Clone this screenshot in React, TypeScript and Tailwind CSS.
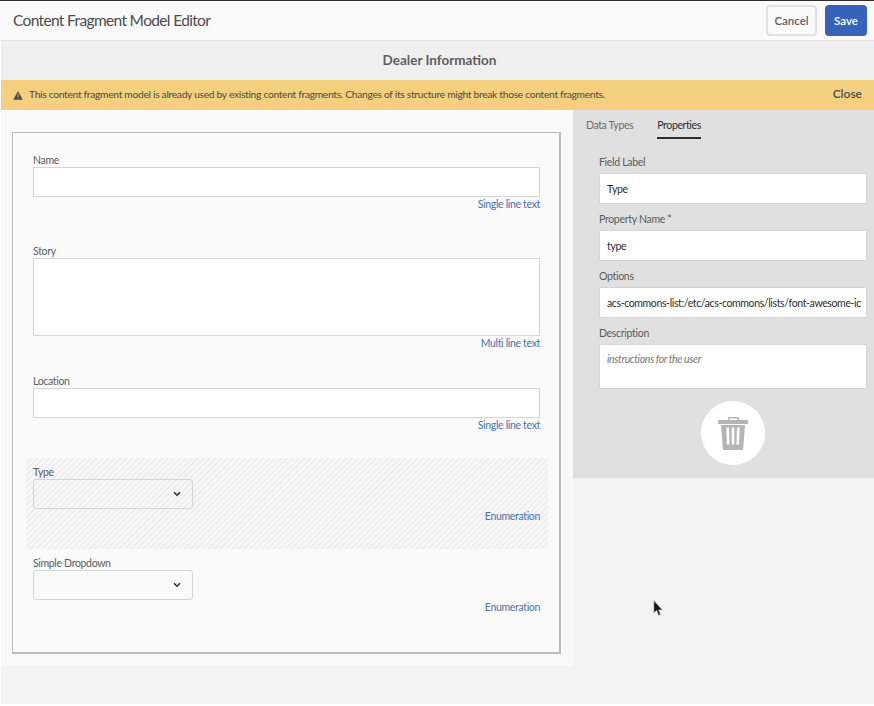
const font = { fontFamily: 'Lato, "Open Sans", sans-serif' }

function TextField({ label, kind, tall }: { label: string; kind: string; tall?: boolean }) {
  return (
    <div className="pl-[20px] pr-[19px]">
      <div className="h-[15px] text-[10.5px] leading-[17px] tracking-[-0.33px] text-[#5c5c5c]">{label}</div>
      <div className={`${tall ? 'h-[78px]' : 'h-[30px]'} border border-[#d5d5d5] bg-white`} />
      <div className="mt-[1px] text-right text-[10.5px] leading-[13px] tracking-[-0.33px] text-[#4a6fb0]">{kind}</div>
    </div>
  )
}

function Chevron() {
  return (
    <svg width="8" height="6" viewBox="0 0 8 6" className="text-[#2c2c2c]">
      <path d="M1 1.2 4 4.2 7 1.2" fill="none" stroke="currentColor" strokeWidth="1.5" />
    </svg>
  )
}

function SelectField({ label }: { label: string }) {
  return (
    <div className="flex flex-col">
      <div className="h-[15px] text-[10.5px] leading-[17px] tracking-[-0.33px] text-[#5c5c5c]">{label}</div>
      <div className="flex h-[30px] w-[160px] items-center justify-end rounded-[3px] border border-[#d5d5d5] pr-[11px]">
        <Chevron />
      </div>
      <div className="mt-[1px] text-right text-[10.5px] leading-[13px] tracking-[-0.33px] text-[#4a6fb0]">Enumeration</div>
    </div>
  )
}

function PropField({ label, value, italic }: { label: string; value?: string; italic?: boolean }) {
  return (
    <div className="mb-[8px]">
      <div className="h-[18px] text-[10.5px] leading-[15px] tracking-[-0.3px] text-[#5c5c5c]">{label}</div>
      <div
        className={`${italic ? 'h-[45px] pt-[7px] text-[10.5px] italic text-[#777777]' : 'h-[31px] text-[10.5px] leading-[30px] text-[#2c2c2c]'} overflow-hidden whitespace-nowrap rounded-[1px] border border-[#d5d5d5] bg-white pl-[7px] tracking-[-0.37px]`}
      >
        {value}
      </div>
    </div>
  )
}

export default function App() {
  return (
    <div style={font} className="relative flex h-[706px] w-[874px] flex-col overflow-hidden bg-[#f3f3f3]">
      <header className="flex h-[41px] shrink-0 items-center justify-between border-t border-b border-t-[#2e2e2e] border-b-[#e2e2e2] bg-[#fafafa] pl-[13px] pr-[7px]">
        <h1 className="text-[15.5px] tracking-[-0.65px] text-[#4b4b4b]">Content Fragment Model Editor</h1>
        <div className="flex gap-[8px]">
          <button className="h-[31px] w-[51px] rounded-[4px] border-2 border-[#e1e1e1] bg-[#fafafa] text-[11.5px] font-semibold text-[#5f5f5f]">Cancel</button>
          <button className="h-[31px] w-[42px] rounded-[4px] bg-[#3663b9] text-[11.5px] font-semibold text-white">Save</button>
        </div>
      </header>

      <div className="flex h-[39px] shrink-0 items-center justify-center bg-[#efefef] pl-[5px] text-[13.5px] font-bold text-[#5e5e5e]">Dealer Information</div>

      <div className="flex h-[30px] shrink-0 items-center justify-between bg-[#f3cf7e] pl-[13px] pr-[12px] text-[#4b4b4b]">
        <div className="flex items-center gap-[6px] text-[10.25px] tracking-[-0.3px]">
          <svg width="10" height="9" viewBox="0 0 10 9">
            <path d="M5 .3 9.800 8.700H.2Z" fill="#4b4b4b" />
            <path d="M4.600 3h.8v3h-.8ZM4.600 6.700h.8v.9h-.8Z" fill="#f3cf7e" />
          </svg>
          <span>This content fragment model is already used by existing content fragments. Changes of its structure might break those content fragments.</span>
        </div>
        <span className="-mt-[3px] text-[12px] font-semibold">Close</span>
      </div>

      <div className="flex flex-1 items-start">
        <div className="h-[556px] w-[573px] shrink-0 bg-[#f9f9f9] pl-[12px] pt-[22px]">
          <div className="h-[522px] w-[549px] border border-b-2 border-r-2 border-[#bcbcbc] bg-[#fafafa] pt-[19px]">
            <TextField label="Name" kind="Single line text" />
            <div className="h-[32px]" />
            <TextField label="Story" kind="Multi line text" tall />
            <div className="h-[23px]" />
            <TextField label="Location" kind="Single line text" />
            <div className="h-[26px]" />
            <div className="ml-[13px] mr-[11px] h-[91px] bg-[repeating-linear-gradient(135deg,#ececec_0,#fafafa_2.1px,#ececec_4.2px)] pl-[7px] pr-[8px] pt-[6px]">
              <SelectField label="Type" />
            </div>
            <div className="pl-[20px] pr-[19px] pt-[6px]">
              <SelectField label="Simple Dropdown" />
            </div>
          </div>
        </div>

        <aside className="h-[368px] w-[301px] shrink-0 bg-[#e0e0e0] pl-[13px]">
          <nav className="flex h-[29px] gap-[24px] pt-[8px] text-[10.5px] tracking-[-0.38px]">
            <span className="text-[#6e6e6e]">Data Types</span>
            <span className="h-[21px] border-b-2 border-[#2c2c2c] text-[#2c2c2c]">Properties</span>
          </nav>
          <div className="w-[281px] pl-[13px] pt-[16px]">
            <PropField label="Field Label" value="Type" />
            <PropField label="Property Name *" value="type" />
            <PropField label="Options" value="acs-commons-list:/etc/acs-commons/lists/font-awesome-ic" />
            <PropField label="Description" value="instructions for the user" italic />
            <div className="mx-auto mt-[12px] flex h-[64px] w-[64px] items-center justify-center rounded-full bg-white">
              <svg width="30" height="33" viewBox="0 0 30 33" fill="#b5b5b5">
                <path d="M10 3V1a1 1 0 0 1 1-1h9a1 1 0 0 1 1 1v2h-1.500V1.500h-8V3Z" />
                <path d="M1 3h28a1 1 0 0 1 1 1v3H0V4a1 1 0 0 1 1-1Z" />
                <path d="M3 8h24l-1.800 23.500a1.500 1.500 0 0 1-1.500 1.500H6.300a1.500 1.500 0 0 1-1.500-1.500ZM8.300 10.500l.7 17h2.500l-.5-17ZM13.700 10.500v17h2.600v-17ZM19 10.500l-.5 17H21l.7-17Z" fillRule="evenodd" />
              </svg>
            </div>
          </div>
        </aside>
      </div>

      <div className="h-[2px] shrink-0 bg-white" />
      <div className="absolute bottom-0 left-0 top-[41px] w-[1px] bg-white" />

      <svg width="11" height="17" viewBox="0 0 11 17" className="absolute left-[653px] top-[600px]">
        <path d="M.8.500v12.500l2.900-2.500 1.900 5 2-.9-1.900-4.700h3.800Z" fill="#1a1a1a" stroke="#d8d8d8" strokeWidth=".6" />
      </svg>
    </div>
  )
}
